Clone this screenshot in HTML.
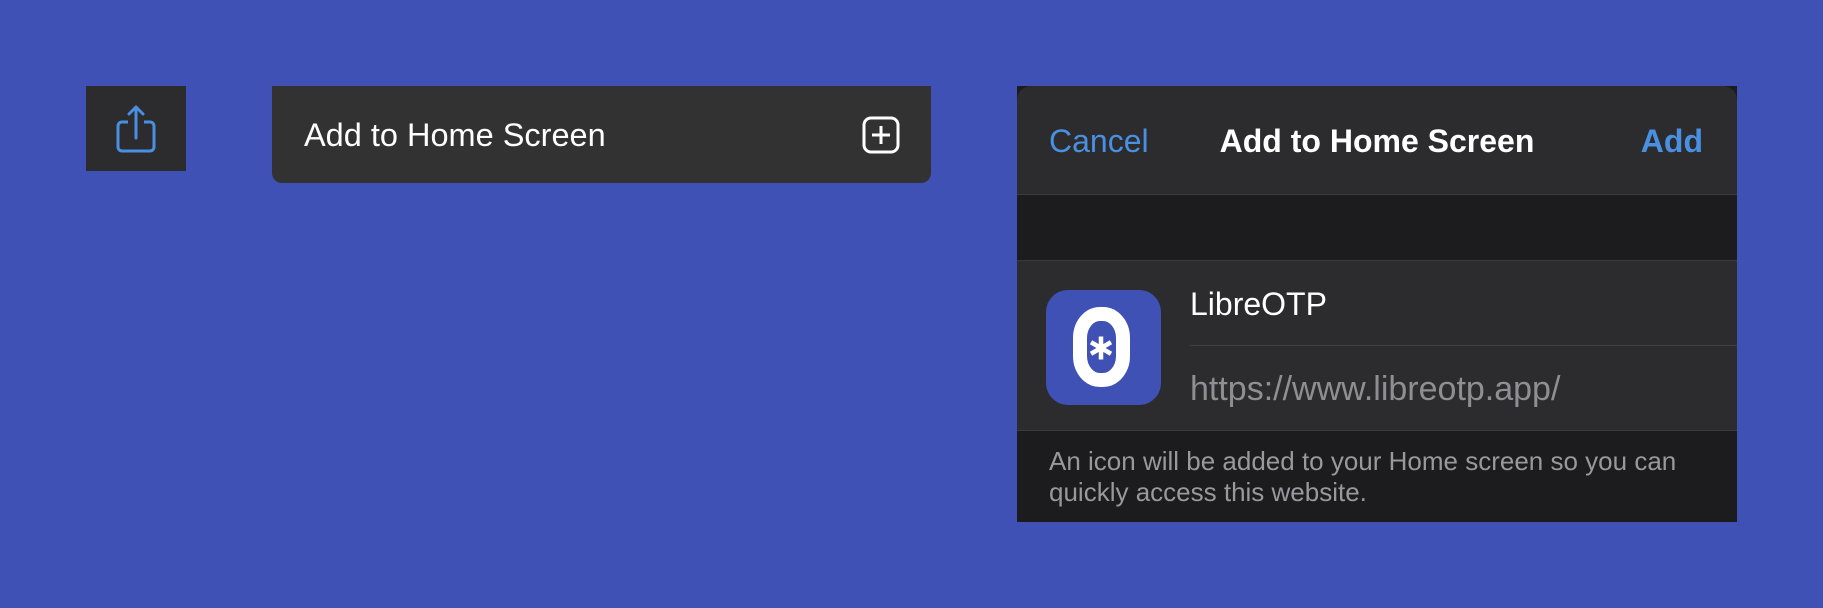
<!DOCTYPE html>
<html><head><meta charset="utf-8"><style>
*{margin:0;padding:0;box-sizing:border-box}
body{width:1823px;height:608px;background:#3f51b5;position:relative;overflow:hidden;font-family:"Liberation Sans",sans-serif}
.a{position:absolute;white-space:nowrap}
</style></head><body>
<div class="a" style="left:86px;top:86px;width:100px;height:85px;background:#2c2c2e"></div>
<svg class="a" style="left:86px;top:86px" width="100" height="85" viewBox="0 0 100 85">
<path d="M42 36 H36 a4 4 0 0 0 -4 4 V61 a4 4 0 0 0 4 4 H64 a4 4 0 0 0 4 -4 V40 a4 4 0 0 0 -4 -4 H58" fill="none" stroke="#4a90e2" stroke-width="3"/>
<path d="M50 52 V21 M43 28 L50 21 L57 28" fill="none" stroke="#4a90e2" stroke-width="3" stroke-linecap="round" stroke-linejoin="round"/>
</svg>
<div class="a" style="left:272px;top:86px;width:659px;height:97px;background:#323232;border-radius:0 0 10px 10px"></div>
<div class="a" style="left:304px;top:117px;font-size:32.5px;color:#fff;line-height:36px">Add to Home Screen</div>
<svg class="a" style="left:862px;top:116px" width="38" height="38" viewBox="0 0 38 38">
<rect x="2" y="2" width="34" height="34" rx="7" fill="none" stroke="#fff" stroke-width="3"/>
<path d="M19 10 V28 M10 19 H28" stroke="#fff" stroke-width="3"/>
</svg>
<div class="a" style="left:1017px;top:86px;width:720px;height:436px;background:#1c1c1e"></div>
<div class="a" style="left:1017px;top:86px;width:720px;height:436px;background:#2c2c2e;border-radius:14px 14px 0 0;overflow:hidden">
<div class="a" style="left:0;top:108px;width:720px;height:67px;background:#1c1c1e;border-top:1px solid #3a3a3c;border-bottom:1px solid #3a3a3c"></div>
<div class="a" style="left:0;top:344px;width:720px;height:92px;background:#1c1c1e;border-top:1px solid #3a3a3c"></div>
<div class="a" style="left:173px;top:259px;width:547px;height:1px;background:#3f3f42"></div>
</div>
<div class="a" style="left:1049px;top:122px;font-size:32px;color:#4a90e2;line-height:38px">Cancel</div>
<div class="a" style="left:1017px;width:720px;text-align:center;top:122px;font-size:32px;color:#fff;font-weight:bold;line-height:38px">Add to Home Screen</div>
<div class="a" style="right:120px;top:122px;font-size:32px;color:#4a90e2;font-weight:bold;line-height:38px">Add</div>
<svg class="a" style="left:1046px;top:290px" width="115" height="115" viewBox="0 0 115 115">
<rect width="115" height="115" rx="22" fill="#3f51b5"/>
<rect x="34" y="24" width="43" height="66" rx="20" ry="24" fill="none" stroke="#fff" stroke-width="14"/>
<path d="M55 46.5 V69.5 M45 52.25 L65 63.75 M45 63.75 L65 52.25" stroke="#fff" stroke-width="4.5"/>
</svg>
<div class="a" style="left:1190px;top:286px;font-size:32px;color:#fff;line-height:36px">LibreOTP</div>
<div class="a" style="left:1190px;top:370px;font-size:34px;color:#8e8e93;line-height:38px">https://www.libreotp.app/</div>
<div class="a" style="left:1049px;top:446px;font-size:26px;color:#98989d;line-height:31px">An icon will be added to your Home screen so you can<br>quickly access this website.</div>
</body></html>
